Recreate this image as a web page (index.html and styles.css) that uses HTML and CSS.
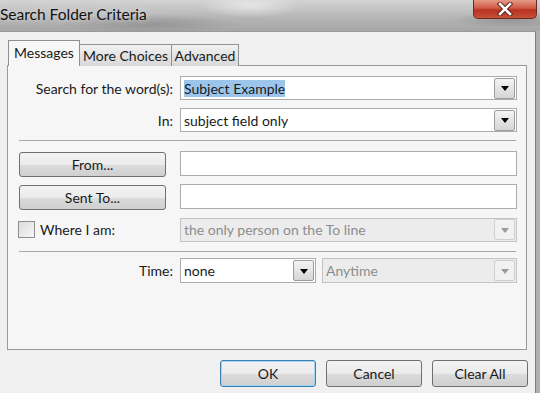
FILE: index.html
```html
<!DOCTYPE html>
<html lang="en">
<head>
  <meta charset="UTF-8">
  <title>Search Folder Criteria</title>
  <link rel="stylesheet" href="styles.css">
</head>
<body>
  <div class="window">
    <div class="titlebar">
      <span class="title">Search Folder Criteria</span>
      <span class="close">
        <svg width="20" height="14" viewBox="0 0 20 14">
          <path d="M5 2 L15 12 M15 2 L5 12" stroke="#5a2018" stroke-width="4.5" stroke-linecap="square"/>
          <path d="M5 2 L15 12 M15 2 L5 12" stroke="#ffffff" stroke-width="2.6" stroke-linecap="square"/>
        </svg>
      </span>
    </div>

    <div class="frame">
      <div class="client">
        <div class="tabs">
          <div class="tab active">Messages</div>
          <div class="tab">More Choices</div>
          <div class="tab">Advanced</div>
        </div>

        <div class="panel">
          <div class="row row-combo">
            <span class="label">Search for the word(s):</span>
            <div class="combo wide">
              <span class="value"><span class="selected">Subject Example</span></span>
              <span class="drop"><i class="arrow"></i></span>
            </div>
          </div>

          <div class="row row-combo">
            <span class="label">In:</span>
            <div class="combo wide">
              <span class="value">subject field only</span>
              <span class="drop"><i class="arrow"></i></span>
            </div>
          </div>

          <div class="sep sep-top"></div>

          <div class="row row-btn first-btn">
            <span class="label left"><button class="btn side">From...</button></span>
            <div class="field"></div>
          </div>

          <div class="row row-btn">
            <span class="label left"><button class="btn side">Sent To...</button></span>
            <div class="field"></div>
          </div>

          <div class="row row-check">
            <span class="label left">
              <span class="checkbox"></span>
              <span class="check-text">Where I am:</span>
            </span>
            <div class="combo wide disabled">
              <span class="value">the only person on the To line</span>
              <span class="drop"><i class="arrow"></i></span>
            </div>
          </div>

          <div class="sep sep-bottom"></div>

          <div class="row row-time">
            <span class="label">Time:</span>
            <div class="combo time">
              <span class="value">none</span>
              <span class="drop"><i class="arrow"></i></span>
            </div>
            <div class="combo anytime disabled">
              <span class="value">Anytime</span>
              <span class="drop"><i class="arrow"></i></span>
            </div>
          </div>
        </div>

        <div class="actions">
          <button class="btn action default">OK</button>
          <button class="btn action">Cancel</button>
          <button class="btn action">Clear All</button>
        </div>
      </div>
    </div>
  </div>
</body>
</html>
```

FILE: styles.css
```css
body {
  margin: 0;
  width: 540px;
  height: 393px;
  overflow: hidden;
  font-family: Lato, 'Liberation Sans', sans-serif;
  font-size: 14px;
  color: #1a1a1a;
  background: #a9a9a9;
}

.window {
  width: 540px;
  height: 393px;
  display: flex;
  flex-direction: column;
}

/* title bar (blurred aero glass) */
.titlebar {
  height: 31px;
  display: flex;
  justify-content: space-between;
  align-items: flex-start;
  background:
    radial-gradient(ellipse 90px 10px at 150px 24px, rgba(120, 120, 120, 0.45), transparent),
    radial-gradient(ellipse 60px 8px at 510px 20px, rgba(110, 110, 110, 0.4), transparent),
    radial-gradient(ellipse 50px 12px at 250px 6px, rgba(255, 255, 255, 0.5), transparent),
    linear-gradient(to bottom, #d4d4d4, #b4b4b4 60%, #a6a6a6);
}

.title {
  font-family: Lato, 'Liberation Sans', sans-serif;
  font-size: 15.5px;
  line-height: 17px;
  padding-top: 6px;
  color: #111;
  text-shadow: 0 0 6px rgba(255, 255, 255, 0.7);
}

.close {
  width: 64px;
  height: 19px;
  margin-right: 3px;
  display: flex;
  justify-content: center;
  align-items: center;
  border: 1px solid #6b2b22;
  border-top: none;
  border-radius: 0 0 5px 5px;
  background: linear-gradient(to bottom, #e49a86, #d05a44 45%, #b83220 55%, #c8503a);
  box-sizing: border-box;
}

.frame {
  flex: 1;
  display: flex;
  background: linear-gradient(to right, #8c8c8c, #b0b0b0);
}

.client {
  width: 536px;
  background: #f0f0f0;
  border-top: 1px solid #9a9a9a;
  border-right: 1px solid #7c7c7c;
  box-sizing: border-box;
  padding-top: 9px;
}

/* tabs */
.tabs {
  display: flex;
  align-items: flex-end;
  height: 25px;
  padding-left: 8px;
  position: relative;
  z-index: 1;
  margin-bottom: -1px;
}

.tab {
  height: 22px;
  line-height: 21px;
  padding: 0;
  text-align: center;
  white-space: nowrap;
  flex-shrink: 0;
  border: 1px solid #8e9092;
  border-bottom: none;
  border-left: none;
  background: linear-gradient(to bottom, #f2f2f2, #e3e3e3 50%, #d9d9d9);
  box-sizing: border-box;
}

.tab.active {
  width: 72px;
  height: 26px;
  line-height: 24px;
  border-left: 1px solid #8e9092;
  background: #f7f7f7;
}

.tab:nth-child(2) { width: 92px; }
.tab:nth-child(3) { width: 67px; }

/* panel */
.panel {
  margin-left: 7px;
  width: 520px;
  height: 285px;
  border: 1px solid #9a9a9a;
  background: #f6f6f6;
  box-sizing: border-box;
  padding-top: 10px;
}

.row {
  display: flex;
  align-items: center;
}

.label {
  width: 165px;
  margin-right: 7px;
  text-align: right;
  white-space: nowrap;
  flex-shrink: 0;
}

.label.left {
  text-align: left;
  display: flex;
  align-items: center;
}

.row-combo {
  height: 24px;
  margin-bottom: 8px;
}

.row-btn {
  height: 26px;
  margin-top: 7px;
  align-items: flex-start;
}

.row-btn.first-btn { margin-top: 10px; }

.row-check {
  height: 25px;
  margin-top: 7px;
}

.row-time {
  height: 25px;
  margin-top: 6px;
}

.sep {
  height: 1px;
  margin-left: 11px;
  width: 497px;
  background: #a8a8a8;
}

.sep-top { margin-top: 3px; }
.sep-bottom { margin-top: 9px; }

/* combos and fields */
.combo {
  height: 25px;
  display: flex;
  align-items: center;
  justify-content: space-between;
  border: 1px solid #acacac;
  background: #fff;
  box-sizing: border-box;
  padding-left: 3px;
}

.combo.wide { width: 337px; height: 24px; }
.combo.time { width: 136px; margin-right: 6px; }
.combo.anytime { width: 195px; }

.value {
  white-space: nowrap;
  overflow: hidden;
}

.selected {
  background: #9cc5ec;
  padding: 1px 0;
}

.combo.disabled {
  background: #ececec;
  border-color: #c4c4c4;
  color: #8c8c8c;
}

.drop {
  width: 21px;
  height: 21px;
  margin-right: 1px;
  display: flex;
  justify-content: center;
  align-items: center;
  border: 1px solid #9c9c9c;
  border-radius: 2px;
  background: linear-gradient(to bottom, #f4f4f4, #e4e4e4 50%, #d6d6d6);
  box-sizing: border-box;
}

.arrow {
  width: 0;
  height: 0;
  border-left: 4px solid transparent;
  border-right: 4px solid transparent;
  border-top: 5px solid #000;
  margin-top: 1px;
}

.disabled .drop {
  border-color: #cfcfcf;
  background: #f1f1f1;
}

.disabled .arrow { border-top-color: #9a9a9a; }

.field {
  width: 337px;
  height: 25px;
  border: 1px solid #acacac;
  background: #fff;
  box-sizing: border-box;
}

/* buttons */
.btn {
  font-family: Lato, 'Liberation Sans', sans-serif;
  font-size: 14px;
  color: #1a1a1a;
  border: 1px solid #707070;
  border-radius: 3px;
  background: linear-gradient(to bottom, #f3f3f3, #ebebeb 50%, #dcdcdc 51%, #cfcfcf);
  box-sizing: border-box;
  padding: 0;
}

.btn.side {
  width: 147px;
  height: 25px;
  margin-left: 11px;
  margin-top: 1px;
}

.checkbox {
  width: 17px;
  height: 17px;
  margin-left: 10px;
  margin-right: 5px;
  border: 1px solid #8e8f8f;
  background: linear-gradient(to bottom right, #dcdcdc, #f6f6f6);
  box-sizing: border-box;
}

.actions {
  display: flex;
  justify-content: flex-end;
  gap: 10px;
  margin-top: 10px;
  padding-right: 7px;
}

.btn.action {
  width: 96px;
  height: 27px;
}

.btn.default {
  border-color: #3c7fb1;
  box-shadow: inset 0 0 0 1px #9fd7f5;
}
```
